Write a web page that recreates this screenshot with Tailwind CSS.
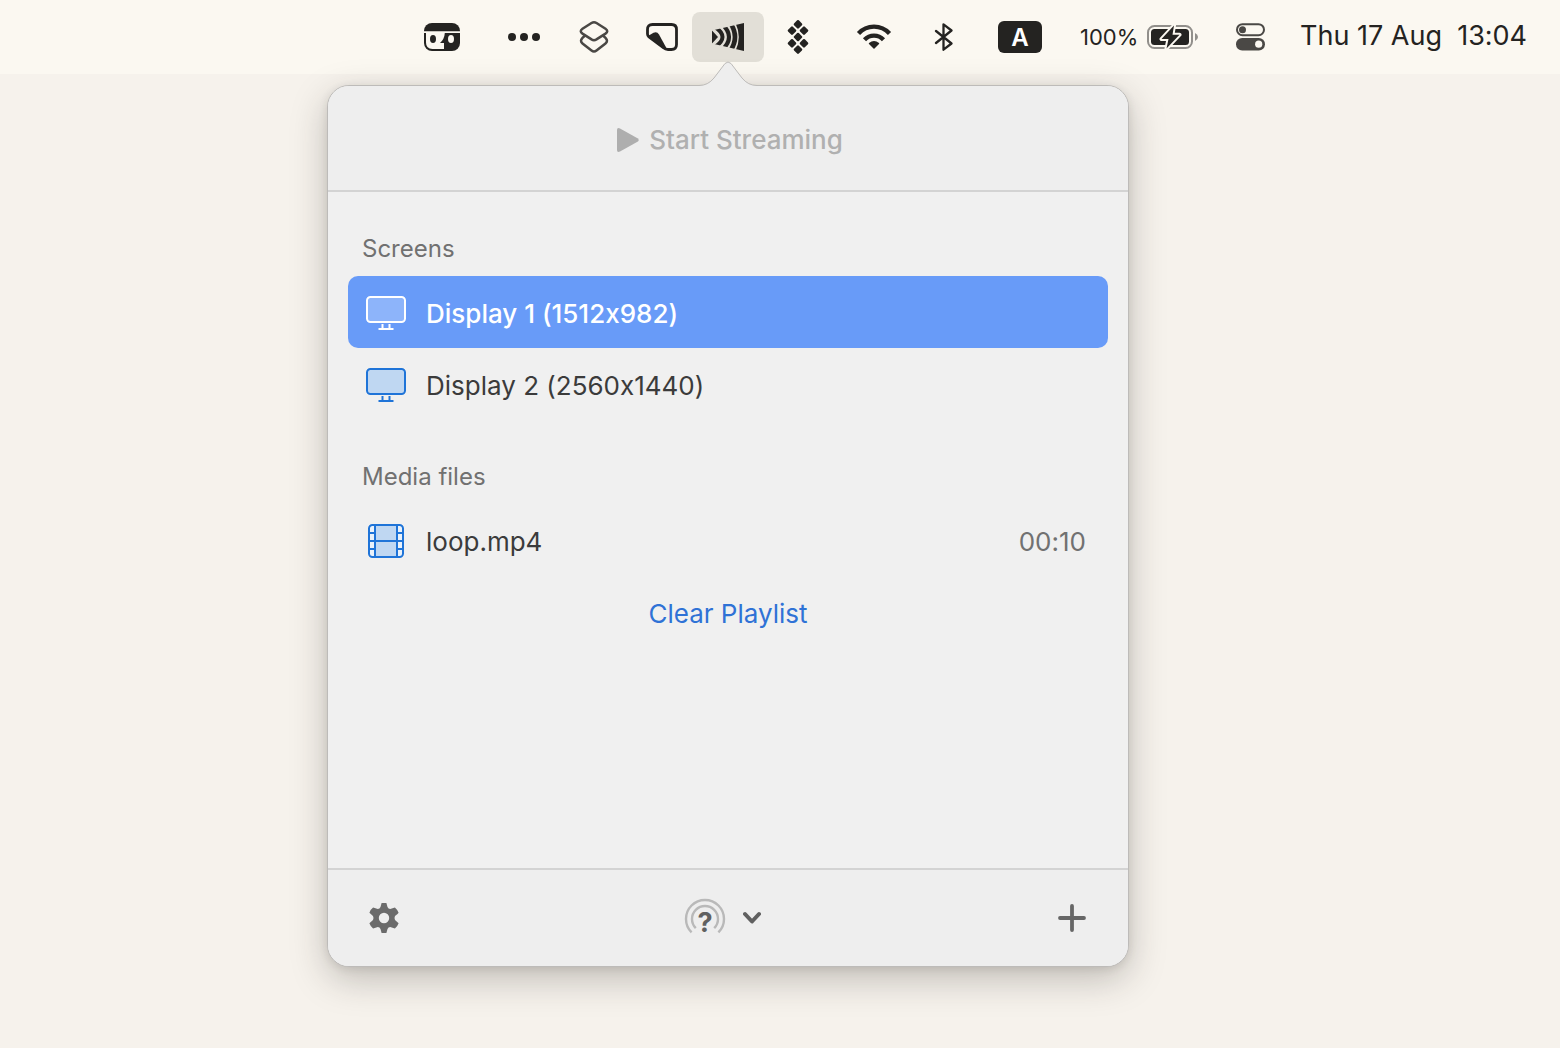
<!DOCTYPE html>
<html lang="en">
<head>
<meta charset="utf-8">
<meta name="viewport" content="width=device-width, initial-scale=1">
<title>Streaming menu</title>
<script src="https://cdn.jsdelivr.net/npm/@tailwindcss/browser@4"></script>
</head>
<body class="min-h-screen bg-[#f6f2ec] font-['Inter',sans-serif] text-[#242321] [font-feature-settings:'calt'_0]">
<header class="flex h-[74px] items-center justify-end bg-[#fbf8f1]">
  <nav class="flex h-[50px] items-stretch" aria-label="Menu bar">
    <button class="flex w-[100px] items-center justify-center" aria-label="Cassette">
      <svg width="36" height="28" viewBox="0 0 36 28"><rect width="36" height="28" rx="8" fill="#242321"/><path d="M0 8.200H36V10H0Z" fill="#fbf8f1"/><path d="M2 10H20.800Q20.500 16 16 20H20V26H8.500Q2 26 2 19.500Z" fill="#fbf8f1"/><ellipse cx="9" cy="16" rx="3" ry="4" fill="#242321"/><ellipse cx="27" cy="16" rx="3" ry="4" fill="#fbf8f1"/></svg>
    </button>
    <button class="flex w-16 items-center justify-center" aria-label="More">
      <svg width="32" height="8" viewBox="0 0 32 8" fill="#242321"><circle cx="4" cy="4" r="4"/><circle cx="16" cy="4" r="4"/><circle cx="28" cy="4" r="4"/></svg>
    </button>
    <button class="flex w-[76px] items-center justify-center" aria-label="Shortcuts">
      <svg width="30" height="34" viewBox="0 0 30 34" fill="none" stroke="#4a4845" stroke-width="2.500" stroke-linecap="round"><path d="M12.500 3Q15 1.500 17.500 3L26.500 8.800Q30 11.200 26.500 13.600L17.500 19.400Q15 20.900 12.500 19.400L3.500 13.600Q0 11.200 3.500 8.800Z"/><path d="M5.500 16L3.500 17.800Q0.500 21 3.500 23.400L12.500 30.500Q15 32.500 17.500 30.500L26.500 23.400Q29.500 21 26.500 17.800L24.500 16"/></svg>
    </button>
    <button class="flex w-[60px] items-center justify-center" aria-label="Window manager">
      <svg width="32" height="28" viewBox="0 0 32 28" fill="#242321"><path d="M1.500 11V6.500Q1.500 1.500 6.500 1.500H25.500Q30.500 1.500 30.500 6.500V21.500Q30.500 26.500 25.500 26.500H22Q19.500 26.500 17 24.500L3 14Q1.500 12.500 1.500 11Z" fill="none" stroke="#242321" stroke-width="2.800"/><path d="M2 13L7.500 9.700Q11 8 13 11.500L21.500 27L17 25.500Z"/></svg>
    </button>
    <div class="relative">
      <button class="flex h-full w-[72px] items-center justify-center rounded-lg bg-[#e2dfd7]" aria-label="Streaming" aria-expanded="true">
        <svg width="32" height="28" viewBox="0 0 32 28"><defs><clipPath id="horn"><path d="M0 7.500L32 0V28L0 20.500Z"/></clipPath></defs><g clip-path="url(#horn)" fill="none" stroke="#242321"><path d="M0 7.500L6 14L0 20.500Z" fill="#242321" stroke="none"/><path d="M3 4Q18 14 3 24" stroke-width="4"/><path d="M10 1Q24 14 10 27" stroke-width="4.200"/><path d="M17.500 -1Q28.500 14 17.500 29" stroke-width="4.600"/><path d="M23 -1Q30.600 14 23 29H33V-1Z" fill="#242321" stroke="none"/></g></svg>
      </button>
      <section class="absolute top-[73px] left-1/2 z-10 w-[802px] -translate-x-1/2 rounded-[22px] border border-[#bdbbb9] bg-[#f0f0f0] shadow-[0_12px_36px_rgba(40,36,32,0.26),0_2px_8px_rgba(40,36,32,0.10)]" aria-label="Streaming sources">
        <svg class="absolute -top-[25px] left-1/2 -translate-x-1/2" width="64" height="27" viewBox="0 0 64 27"><path d="M3 24.500Q12 24.500 18 17L29 2.500Q32 -0.500 35 2.500L46 17Q52 24.500 61 24.500L58 27H6Z" fill="#eeeeee"/><path d="M3 24.500Q12 24.500 18 17L29 2.500Q32 -0.500 35 2.500L46 17Q52 24.500 61 24.500" fill="none" stroke="#bdbbb9"/></svg>
        <div class="flex h-[106px] items-center justify-center rounded-t-[21px] border-b-2 border-[#d3d3d3] bg-[#eeeeee] pt-1">
          <button class="flex items-center gap-2.5 pl-1 text-[26px] leading-8 font-medium text-[#b0b0b0]" disabled>
            <svg width="22" height="26" viewBox="0 0 22 26" fill="#aeaeae"><path d="M0 3Q0 0 3 1.400L20.500 11.200Q23 13 20.500 14.800L3 24.600Q0 26 0 23Z"/></svg>
            Start Streaming
          </button>
        </div>
        <div class="min-h-[676px] px-5 pt-7">
          <h2 class="flex h-14 items-center px-[14px] pt-0.5 text-2xl text-[#717171]">Screens</h2>
          <ul>
            <li><button class="flex h-[72px] w-full items-center gap-5 rounded-[10px] bg-[#689bf8] px-[18px] pt-0.5 text-left text-[26px] font-medium text-white">
              <svg width="40" height="36" viewBox="0 0 40 36" fill="none" stroke="#fff" stroke-width="2"><rect x="1" y="2" width="38" height="25" rx="3.500" fill="#8db4fa"/><path d="M16.500 29V34M23.500 29V34M12.500 34H27.500"/></svg>
              Display 1 (1512x982)</button></li>
            <li><button class="flex h-[72px] w-full items-center gap-5 rounded-[10px] px-[18px] pt-0.5 text-left text-[26px] text-[#3b3b3b]">
              <svg width="40" height="36" viewBox="0 0 40 36" fill="none" stroke="#1f74d8" stroke-width="2"><rect x="1" y="2" width="38" height="25" rx="3.500" fill="#bfd7f2"/><path d="M16.500 29V34M23.500 29V34M12.500 34H27.500"/></svg>
              Display 2 (2560x1440)</button></li>
          </ul>
          <h2 class="mt-7 flex h-14 items-center px-[14px] pt-0.5 text-2xl text-[#717171]">Media files</h2>
          <ul>
            <li><button class="flex h-[72px] w-full items-center gap-5 rounded-[10px] pt-0.5 pr-[22px] pl-[18px] text-left text-[26px] text-[#3b3b3b]">
              <svg width="40" height="36" viewBox="0 0 40 36" fill="none" stroke="#1f74d8" stroke-width="2"><rect x="3" y="2" width="34" height="32" rx="3.500" fill="#eaf2fb"/><path d="M9 2H31V34H9Z" fill="#bfd7f2"/><path d="M9 18H31M3 10H9M3 18H9M3 26H9M31 10H37M31 18H37M31 26H37"/></svg>
              <span class="flex-1">loop.mp4</span>
              <span class="text-[#717171]">00:10</span></button></li>
          </ul>
          <div class="flex h-[72px] items-center justify-center pt-0.5">
            <button class="text-[26px] text-[#2f72d6]">Clear Playlist</button>
          </div>
        </div>
        <footer class="grid h-[98px] grid-cols-3 items-center rounded-b-[21px] border-t-2 border-[#d3d3d3] bg-[#eeeeee] px-10">
          <button class="justify-self-start" aria-label="Settings">
            <svg width="32" height="32" viewBox="0 0 32 32" fill="#6b6b6b" fill-rule="evenodd"><path d="M13.600 1H18.400L19.500 5Q20.300 7 22.200 7L26.900 5.600Q29 7.300 30.600 10.800Q30.300 11.800 27 14Q26 16 27 18L30.600 21.200Q29.500 24.500 26.900 26.400L22.200 25Q20.300 25 19.500 27L18.400 31H13.600L12.500 27Q11.700 25 9.800 25L5.100 26.400Q2.500 24.500 1.400 21.200L5 18Q6 16 5 14L1.400 10.800Q2.500 7.500 5.100 5.600L9.800 7Q11.700 7 12.500 5ZM16 10.800A5.200 5.200 0 1 0 16 21.200A5.200 5.200 0 1 0 16 10.800Z"/></svg>
          </button>
          <button class="-ml-3 flex items-center gap-[17px] justify-self-center" aria-label="Help and receivers">
            <svg width="42" height="42" viewBox="0 0 42 42"><g fill="none" stroke="#b9b9b9" stroke-width="2.400"><path d="M7.600 35.400A19 19 0 1 1 34.400 35.400"/><path d="M11.800 31.200A13 13 0 1 1 30.200 31.200"/></g><text x="21" y="35" text-anchor="middle" font-size="27" font-weight="700" fill="#606060">?</text></svg>
            <svg width="18" height="14" viewBox="0 0 18 14" fill="none" stroke="#606060" stroke-width="4" stroke-linecap="round" stroke-linejoin="round"><path d="M2 3L9 10.500L16 3"/></svg>
          </button>
          <button class="justify-self-end" aria-label="Add">
            <svg width="32" height="32" viewBox="0 0 32 32" fill="none" stroke="#666666" stroke-width="3.800" stroke-linecap="round"><path d="M16 4V28M4 16H28"/></svg>
          </button>
        </footer>
      </section>
    </div>
    <button class="flex w-[68px] items-center justify-center" aria-label="Diamonds">
      <svg width="24" height="36" viewBox="0 0 24 36" fill="#242321" stroke="#242321" stroke-width="2.400" stroke-linejoin="round"><path d="M12 2.200L15.100 5.300L12 8.400L8.900 5.300ZM6 8.500L9.100 11.600L6 14.700L2.900 11.600ZM18 8.500L21.100 11.600L18 14.700L14.900 11.600ZM12 14.900L15.100 18L12 21.100L8.900 18ZM6 21.200L9.100 24.300L6 27.400L2.900 24.300ZM18 21.200L21.100 24.300L18 27.400L14.900 24.300ZM12 27.500L15.100 30.600L12 33.700L8.900 30.600Z"/></svg>
    </button>
    <button class="flex w-[84px] items-center justify-center" aria-label="Wi-Fi">
      <svg width="36" height="28" viewBox="0 0 36 28" fill="none" stroke="#242321" stroke-width="4.300"><path d="M2.500 10.500A21 21 0 0 1 33.500 10.500"/><path d="M8.500 16.700A13 13 0 0 1 27.500 16.700"/><path d="M13 20Q18 16 23 20Q23.500 20.500 23 21L18.500 25.500Q18 26 17.500 25.500L13 21Q12.500 20.500 13 20Z" fill="#242321" stroke="none"/></svg>
    </button>
    <button class="flex w-14 items-center justify-center" aria-label="Bluetooth">
      <svg width="20" height="28" viewBox="0 0 20 28" fill="none" stroke="#242321" stroke-width="2.300" stroke-linecap="round" stroke-linejoin="round"><path d="M2 8L17.500 20.500L9.500 26.700V1.300L17.500 7.500L2 20"/></svg>
    </button>
    <button class="flex w-24 items-center justify-center" aria-label="Input source">
      <span class="flex h-8 w-11 items-center justify-center rounded-md bg-[#242321] pt-0.5 text-2xl font-semibold text-white">A</span>
    </button>
    <button class="flex w-[142px] items-center justify-between pr-[11px] pl-3 text-[22px]">
      <span>100%</span>
      <svg width="52" height="26" viewBox="0 0 52 26"><rect x="1" y="2" width="44" height="22" rx="6.500" fill="none" stroke="#918f8b" stroke-width="2"/><rect x="4" y="5" width="38" height="16" rx="3.500" fill="#242321"/><path d="M48 9Q51 10.500 51 13Q51 15.500 48 17Z" fill="#918f8b"/><path d="M27 1.500L14.500 15H21.500L19.500 24.500L32.500 10.700H25.500Z" fill="#242321" stroke="#fbf8f1" stroke-width="4" stroke-linejoin="round" paint-order="stroke"/></svg>
    </button>
    <button class="flex w-20 items-center justify-center" aria-label="Control Center">
      <svg width="29" height="28" viewBox="0 0 29 28" fill="#4a4845"><rect x="1" y="1.200" width="27" height="11" rx="5.500" fill="none" stroke="#4a4845" stroke-width="2"/><circle cx="6.500" cy="6.700" r="3.500"/><rect y="15" width="29" height="12.500" rx="6.200"/><circle cx="22.700" cy="21.200" r="3.600" fill="#fbf8f1"/></svg>
    </button>
    <button class="w-[270px] pb-0.5 pl-[10px] text-left text-[27px] whitespace-pre">Thu 17 Aug  13:04</button>
  </nav>
</header>
</body>
</html>
